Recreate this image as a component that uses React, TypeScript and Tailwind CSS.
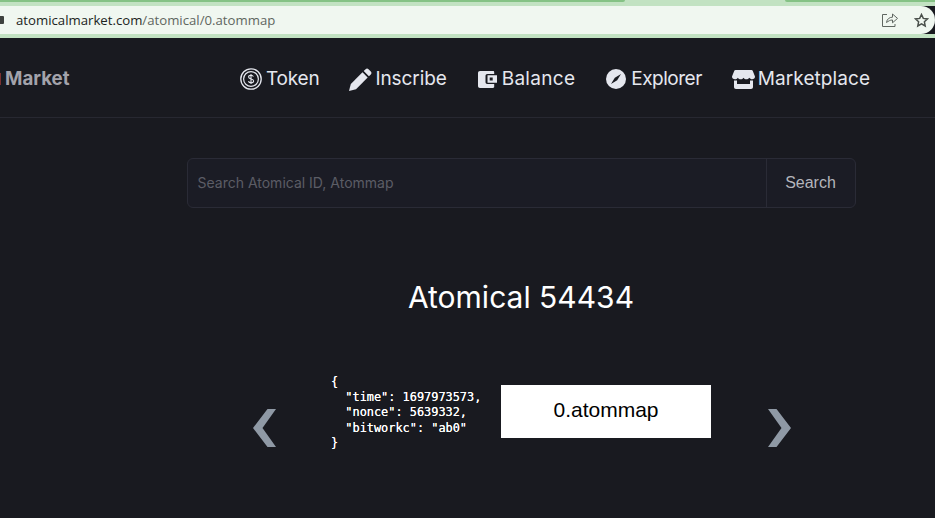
function TokenIcon() {
  return (
    <svg width="22" height="22" viewBox="0 0 22 22" fill="none" stroke="currentColor">
      <circle cx="11" cy="11" r="10.2" strokeWidth="1.3" />
      <circle cx="11" cy="11" r="7.4" strokeWidth="1.2" />
      <path
        d="M13.4 8.600c-.4-.9-1.300-1.300-2.400-1.300-1.300 0-2.400.7-2.400 1.800 0 2.500 5 1.300 5 3.800 0 1.100-1.100 1.800-2.600 1.800-1.200 0-2.200-.5-2.600-1.500M11 6v10"
        strokeWidth="1.1"
      />
    </svg>
  );
}

function PencilIcon() {
  return (
    <svg width="23" height="23" viewBox="0 0 23 23" fill="currentColor">
      <path d="M0 23l1.800-7L13.500 4.300l5.200 5.200L7 21.200z" />
      <path d="M14.700 3.100l1.900-1.900c.9-.9 2-.9 2.900 0l2.300 2.300c.9.9.9 2 0 2.900l-1.900 1.900z" />
    </svg>
  );
}

function WalletIcon() {
  return (
    <svg width="19" height="17" viewBox="0 0 19 17" fill="currentColor">
      <path
        fillRule="evenodd"
        d="M2 0h13c.8 0 1.200.5 1.200 1.200V3H9.500C8.100 3 7.500 3.800 7.500 5v6c0 1.200.6 2 2 2h6.700v2.800c0 .7-.4 1.200-1.200 1.200H2c-1.200 0-2-.8-2-2V2C0 .8.800 0 2 0z"
      />
      <path fillRule="evenodd" d="M9.500 4.300H19V11.800H9.500zM11.700 6.500v3h3v-3z" />
    </svg>
  );
}

function CompassIcon() {
  return (
    <svg width="20" height="20" viewBox="0 0 20 20">
      <circle cx="10" cy="10" r="10" fill="currentColor" />
      <path d="M15 5L11.200 11.200 5 15 8.800 8.800z" fill="#191a20" />
    </svg>
  );
}

function StoreIcon() {
  return (
    <svg width="23" height="19" viewBox="0 0 23 19" fill="currentColor">
      <path d="M3.500 0h16c.6 0 1 .3 1.200.8L23 6.500c0 1.700-1.200 2.800-2.900 2.800-1.100 0-2.100-.6-2.900-1.500-.7 1-1.700 1.500-2.900 1.500-1 0-2-.5-2.800-1.500-.7 1-1.700 1.500-2.800 1.500-1.100 0-2.100-.5-2.900-1.500-.7 1-1.700 1.500-2.800 1.500C1.200 9.300 0 8.200 0 6.500L2.300.8C2.500.3 2.900 0 3.500 0z" />
      <path d="M2 10.500h3V14h13v-3.500h3V17c0 1.200-.8 2-2 2H4c-1.200 0-2-.8-2-2z" />
    </svg>
  );
}

function ShareIcon() {
  return (
    <svg width="16" height="14" viewBox="0 0 16 14" fill="none" stroke="#5f6660" strokeWidth="1">
      <path d="M5 1.500H.5v12h12.500V11" />
      <path d="M4.500 9.500c.4-3.500 3-5.300 6-5.300V1l5 4.400-5 4.400V7c-2.500 0-3.900 1-6 2.500z" />
    </svg>
  );
}

function StarIcon() {
  return (
    <svg width="15" height="15" viewBox="0 0 15 15" fill="none" stroke="#4a504b" strokeWidth="1.500">
      <path d="M7.500 1.500l1.800 3.900 4.200.5-3.100 2.900.8 4.200-3.700-2.100-3.700 2.100.8-4.200L1.500 5.900l4.200-.5z" />
    </svg>
  );
}

function Chevron({ flip }: { flip?: boolean }) {
  return (
    <svg width="23" height="38" viewBox="0 0 23 38" className={flip ? "rotate-180" : ""}>
      <path d="M14.500 0H23L9.500 19 23 38h-8.500L0 19z" fill="#8f99a5" />
    </svg>
  );
}

const nav = [
  { label: "Token", icon: <TokenIcon />, cls: "gap-[4px] tracking-[-0.2px]" },
  { label: "Inscribe", icon: <PencilIcon />, cls: "gap-[3px] tracking-[-0.1px]" },
  { label: "Balance", icon: <WalletIcon />, cls: "gap-[5px] ml-[1px] tracking-[0.3px]" },
  { label: "Explorer", icon: <CompassIcon />, cls: "gap-[5px] ml-[1px] tracking-[-0.5px]" },
  { label: "Marketplace", icon: <StoreIcon />, cls: "gap-[3px] tracking-[0.08px]" },
];

export default function App() {
  return (
    <div className="flex h-[518px] w-[935px] flex-col overflow-hidden bg-[#191a20] font-['Liberation_Sans',sans-serif]">
      <div className="flex h-[6px] bg-[#c2e2c2]">
        <div className="h-[2px] w-[625px] rounded-br-md bg-[#85c285]" />
        <div className="w-[160px]" />
        <div className="h-[2px] flex-1 rounded-bl-md bg-[#85c285]" />
      </div>
      <div className="flex h-[28px] items-center rounded-r-2xl bg-[#f0f7f0] pr-[6px] font-['Open_Sans',sans-serif] text-[13.200px]">
        <div className="h-[8px] w-[4px] rounded-r-[1px] bg-[#3d423e]" />
        <span className="mt-[2px] ml-[12px] text-[#202421]">atomicalmarket.com</span>
        <span className="mt-[2px] text-[#5f6660]">/atomical/0.atommap</span>
        <div className="ml-auto flex items-center gap-[16px]">
          <ShareIcon />
          <StarIcon />
        </div>
      </div>
      <div className="h-[4px] bg-[#c2e2c2]" />
      <header className="flex h-[80px] shrink-0 items-center border-b border-[#272831] pt-[3px]">
        <div className="flex items-center">
          <div className="h-[12px] w-[1px] bg-[#7a3030]" />
          <span className="ml-[4px] w-[65px] font-['Inter',sans-serif] text-[18.700px] font-bold text-[#a3a3ab]">
            Market
          </span>
        </div>
        <nav className="ml-[170px] flex items-center gap-[30px] font-['Inter',sans-serif] text-[19px] text-[#e5e7ee]">
          {nav.map((n) => (
            <a key={n.label} className={`flex items-center ${n.cls}`}>
              {n.icon}
              <span>{n.label}</span>
            </a>
          ))}
        </nav>
      </header>
      <main className="flex flex-col items-center pl-[107px]">
        <div className="mt-[40px] flex h-[50px] w-[669px] overflow-hidden rounded-md border border-[#2a2b36] bg-[#1b1c25]">
          <div className="flex flex-1 items-center pb-[2px] pl-[10px] font-['Inter',sans-serif] text-[14px] text-[#5c5d66]">
            Search Atomical ID, Atommap
          </div>
          <div className="flex w-[89px] items-center justify-center border-l border-[#2a2b36] text-[16px] text-[#b4b5bc]">
            Search
          </div>
        </div>
        <h1 className="mt-[69px] font-['Inter',sans-serif] text-[30px] leading-[40px] font-normal text-white">
          Atomical 54434
        </h1>
        <div className="mt-[58px] ml-[2px] flex items-start">
          <div className="mt-[34px]">
            <Chevron />
          </div>
          <pre className="ml-[55px] w-[170px] font-['DejaVu_Sans_Mono',monospace] text-[11.900px] leading-[15.200px] font-normal text-white [text-shadow:0_0_0.6px_#ffffff]">
            {`{
  "time": 1697973573,
  "nonce": 5639332,
  "bitworkc": "ab0"
}`}
          </pre>
          <div className="mt-[10px] flex h-[53px] w-[210px] items-center justify-center bg-white pb-[3px] text-[21px] text-black">
            0.atommap
          </div>
          <div className="mt-[34px] ml-[57px]">
            <Chevron flip />
          </div>
        </div>
      </main>
    </div>
  );
}
